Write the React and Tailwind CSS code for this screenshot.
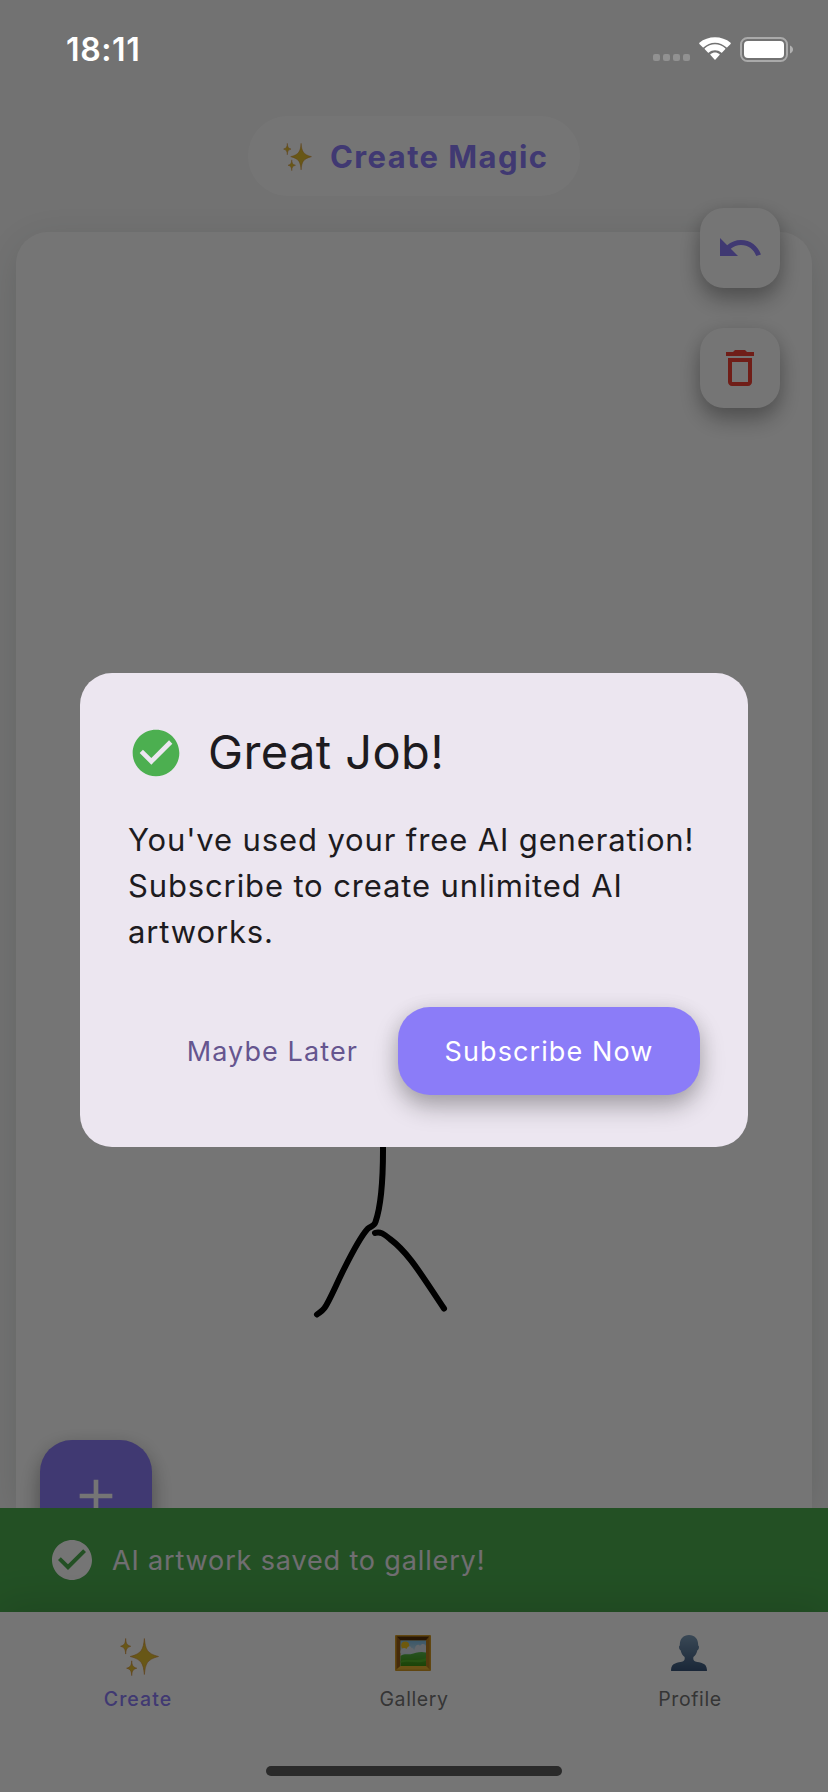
import React from "react";

function Sparkles({ className }) {
  const star = (cx, cy, rx, ry) => {
    const k = 0.17;
    return `M${cx} ${cy - ry}C${cx + rx * 0.08} ${cy - ry * 0.4} ${cx + rx * k} ${cy - ry * k} ${cx + rx} ${cy}C${cx + rx * k} ${cy + ry * k} ${cx + rx * 0.08} ${cy + ry * 0.4} ${cx} ${cy + ry}C${cx - rx * 0.08} ${cy + ry * 0.4} ${cx - rx * k} ${cy + ry * k} ${cx - rx} ${cy}C${cx - rx * k} ${cy - ry * k} ${cx - rx * 0.08} ${cy - ry * 0.4} ${cx} ${cy - ry}Z`;
  };
  return (
    <svg viewBox="0 0 40 39" className={className} fill="#e2bd30" stroke="#cf8a30" strokeWidth="0.6" strokeLinejoin="round">
      <path d={star(25, 19, 14.5, 18.5)} />
      <path d={star(5.8, 8.5, 5.2, 8)} />
      <path d={star(12, 31, 5.2, 7.6)} />
    </svg>
  );
}

function FramedPicture({ className }) {
  return (
    <svg viewBox="0 0 36 36" className={className}>
      <defs>
        <linearGradient id="sky" x1="0" y1="0" x2="0" y2="1">
          <stop offset="0" stopColor="#7fc0e6" />
          <stop offset="0.55" stopColor="#d5e2ec" />
        </linearGradient>
        <linearGradient id="hill" x1="0" y1="0" x2="0" y2="1">
          <stop offset="0" stopColor="#56b548" />
          <stop offset="1" stopColor="#3d9410" />
        </linearGradient>
      </defs>
      <rect width="36" height="36" rx="1" fill="#d39a24" />
      <path d="M1.5 1.5h33L31 5.500H5z" fill="#5a3209" />
      <path d="M1.5 1.5 5.500 5.500v25.500l-4 3.500z" fill="#9a5f17" />
      <path d="M34.500 1.500 31 5.500V31l3.500 3.500z" fill="#b87d1d" />
      <path d="M1.500 34.500 5.500 31H31l3.500 3.500z" fill="#e6b431" />
      <rect x="5.500" y="5.500" width="25.500" height="25.500" fill="url(#sky)" />
      <circle cx="10.200" cy="10.500" r="4" fill="#f0c21c" />
      <path d="M5.500 16c1-3 4-4 6-2 1-3 4-4 5-1 2 0 3 2 3 5h-14zM20 13c1-4 4-4 5-2 2-3 5-2 6 0v8H18z" fill="#dbe0ea" />
      <path d="M5.500 21c4-3 8-1 11-2s9-3 14.500-1.500V31H5.500z" fill="url(#hill)" />
      <path d="M5.500 26c8-3 16 1 25.500-3v3c-9 3-17-1-25.500 2z" fill="#55b52a" />
    </svg>
  );
}

function Bust({ className }) {
  return (
    <svg viewBox="0 0 36 36" className={className}>
      <defs>
        <linearGradient id="bust" x1="0" y1="0" x2="0" y2="1">
          <stop offset="0" stopColor="#7d9dba" />
          <stop offset="1" stopColor="#39557a" />
        </linearGradient>
      </defs>
      <path
        fill="url(#bust)"
        d="M18 0C12.200 0 8.600 4 8.800 10.500c-1.200.2-1 4 .8 4.700.6 3 2 5.300 4 6.800.4 2.400-.2 4-2 4.600-4.800 1.400-11.200.8-11.600 8.400-.1.600.2 1 .8 1h34.400c.6 0 .9-.4.8-1-.4-7.600-6.800-7-11.600-8.400-1.800-.6-2.400-2.200-2-4.600 2-1.500 3.400-3.800 4-6.800 1.800-.7 2-4.500.8-4.700C27.400 4 23.800 0 18 0z"
      />
    </svg>
  );
}

function CheckCircle({ className }) {
  return (
    <svg viewBox="0 0 24 24" className={className} fill="currentColor">
      <path d="M12 2C6.480 2 2 6.480 2 12s4.480 10 10 10 10-4.480 10-10S17.520 2 12 2zm-2 15l-5-5 1.410-1.410L10 14.170l7.590-7.590L19 8l-9 9z" />
    </svg>
  );
}

function Header() {
  return (
    <header className="flex h-[232px] shrink-0 justify-center pt-[116px]">
      <div className="flex h-20 w-[332px] items-center rounded-[40px] bg-white pl-[35px]">
        <Sparkles className="mt-0.5 h-7 w-[29px] shrink-0" />
        <h1 className="ml-[18px] pt-0.5 text-[31px] leading-10 font-bold tracking-[1.400px] whitespace-nowrap text-[#8b7cf8]">
          Create Magic
        </h1>
      </div>
    </header>
  );
}

function ToolButton({ label, className, children }) {
  return (
    <button
      aria-label={label}
      className={`flex size-20 items-center justify-center rounded-3xl bg-white shadow-[0_12px_22px_rgba(0,0,0,0.28),0_2px_18px_rgba(0,0,0,0.10)] ${className}`}
    >
      <svg viewBox="0 0 24 24" className="size-12" fill="currentColor">
        {children}
      </svg>
    </button>
  );
}

function Canvas() {
  return (
    <main className="relative mx-4 flex-1 rounded-t-[32px] bg-white shadow-[0_8px_40px_rgba(30,50,45,0.14)]">
      <div className="absolute -top-6 right-8 flex flex-col gap-10">
        <ToolButton label="Undo" className="text-[#8b7cf8]">
          <path d="M12.500 8c-2.650 0-5.050.99-6.900 2.600L2 7v9h9l-3.620-3.620c1.390-1.160 3.160-1.880 5.120-1.880 3.540 0 6.550 2.310 7.600 5.500l2.370-.78C21.080 11.030 17.150 8 12.500 8z" />
        </ToolButton>
        <ToolButton label="Delete" className="text-[#f44336]">
          <path d="M6 19c0 1.100.9 2 2 2h8c1.100 0 2-.9 2-2V7H6v12zM8 9h8v10H8V9zm7.500-5l-1-1h-5l-1 1H5v2h14V4z" />
        </ToolButton>
      </div>
      <svg
        viewBox="290 1100 180 240"
        className="absolute top-[868px] left-[274px] h-[240px] w-[180px]"
        fill="none"
        stroke="#000"
        strokeWidth="6"
        strokeLinecap="round"
        strokeLinejoin="round"
      >
        <path d="M383 1100V1150C383 1180 381 1206 375.500 1222C374 1227 370 1226 367.500 1229C362 1235 352 1253 344 1269C336 1285 329 1302 324.500 1308C321.500 1312 319 1312.500 317 1314.500" />
        <path d="M375 1233C380 1231 384 1234 390 1239C409 1253 422 1276 444 1308.500" />
      </svg>
      <button
        aria-label="Add"
        className="absolute top-[1208px] left-6 flex size-28 items-center justify-center rounded-[32px] bg-[#8b7cf8] text-white shadow-[0_12px_22px_rgba(0,0,0,0.28),0_2px_18px_rgba(0,0,0,0.10)]"
      >
        <svg viewBox="0 0 24 24" className="size-14" fill="currentColor">
          <path d="M19 13h-6v6h-2v-6H5v-2h6V5h2v6h6v2z" />
        </svg>
      </button>
    </main>
  );
}

function SnackBar() {
  return (
    <div className="relative flex h-[104px] shrink-0 items-center bg-[#4caf50] pl-12">
      <CheckCircle className="size-12 text-white" />
      <p className="ml-4 pt-0.5 text-[27px] leading-10 tracking-[0.860px] whitespace-nowrap text-[#f5eff7]">
        AI artwork saved to gallery!
      </p>
    </div>
  );
}

function NavItem({ label, className, children }) {
  return (
    <a className={`flex flex-1 flex-col items-center ${className}`}>
      <span className="flex h-[75px] items-start justify-center">{children}</span>
      <span className="text-[19.500px] leading-6">{label}</span>
    </a>
  );
}

function BottomNav() {
  return (
    <nav className="relative flex h-[180px] shrink-0 bg-white shadow-[0_-4px_40px_rgba(0,0,0,0.14)]">
      <NavItem label="Create" className="font-medium tracking-[1.050px] text-[#8b7cf8]">
        <Sparkles className="mt-[26px] ml-[3px] h-[38px] w-[39px]" />
      </NavItem>
      <NavItem label="Gallery" className="tracking-[0.600px] text-[#757575]">
        <FramedPicture className="mt-[23px] mr-[3px] size-9" />
      </NavItem>
      <NavItem label="Profile" className="tracking-[0.600px] text-[#757575]">
        <Bust className="mt-[23px] mr-[3px] size-9" />
      </NavItem>
    </nav>
  );
}

function StatusBar() {
  return (
    <div className="absolute inset-x-0 top-0 flex h-[100px] items-start justify-between pr-[34px] pl-[66px] text-white">
      <time className="mt-[30px] text-[32px] leading-10 font-semibold tracking-[0.600px]">18:11</time>
      <div className="mt-9 flex items-start">
        <div className="mt-[18px] flex gap-[3px]">
          <i className="size-[7px] rounded-[2px] bg-[#919191]" />
          <i className="size-[7px] rounded-[2px] bg-[#919191]" />
          <i className="size-[7px] rounded-[2px] bg-[#919191]" />
          <i className="size-[7px] rounded-[2px] bg-[#919191]" />
        </div>
        <svg viewBox="0 0 32 24" className="mt-px ml-[9.500px] h-6 w-8" fill="currentColor">
          <path d="M16 5.700c4.300 0 8.300 1.700 11.300 4.600.3.300.7.300 1 0l3.300-3.400c.3-.3.300-.8 0-1.100C23.100-1.600 8.900-1.600.4 5.800c-.3.300-.3.800 0 1.100l3.300 3.400c.3.300.7.300 1 0C7.700 7.400 11.700 5.700 16 5.700z" />
          <path d="M16 13.200c2.300 0 4.400.8 6.100 2.300.3.300.7.300 1 0l3.100-3.200c.3-.3.300-.8 0-1.100-5.700-5.300-14.700-5.300-20.400 0-.3.300-.3.800 0 1.100l3.100 3.200c.3.300.7.300 1 0 1.700-1.500 3.800-2.300 6.100-2.300z" />
          <path d="M20.500 18.100c.3-.3.300-.8 0-1-2.600-2.200-6.400-2.200-9 0-.3.200-.3.700 0 1l4 4.500c.3.300.7.300 1 0z" />
        </svg>
        <svg viewBox="0 0 54 26" className="ml-[9px] h-[26px] w-[54px]">
          <rect x="1" y="2" width="46" height="23" rx="6.500" fill="none" stroke="#fff" strokeOpacity="0.400" strokeWidth="2" />
          <rect x="4" y="5" width="40" height="17" rx="4" fill="#fff" />
          <path d="M50 9.500c4 1.500 4 6.500 0 8z" fill="#fff" fillOpacity="0.450" />
        </svg>
      </div>
    </div>
  );
}

function SubscribeDialog() {
  return (
    <section role="dialog" className="mt-[28px] h-[474px] w-[668px] rounded-[32px] bg-[#ece6f0] px-12 pt-[52px] text-[#1d1b20]">
      <div className="flex items-center gap-6">
        <CheckCircle className="size-14 text-[#4caf50]" />
        <h2 className="pb-0.5 text-[47px] leading-[54px] tracking-[0.400px] whitespace-nowrap">Great Job!</h2>
      </div>
      <p className="mt-[36px] text-[31px] leading-[46px] tracking-[0.870px] whitespace-nowrap">
        You've used your free AI generation!
        <br />
        Subscribe to create unlimited AI
        <br />
        artworks.
      </p>
      <div className="mt-[52px] flex items-center justify-end gap-4">
        <button className="px-6 pt-0.5 text-[27px] leading-10 tracking-[1.100px] whitespace-nowrap text-[#65558f]">
          Maybe Later
        </button>
        <button className="h-[88px] w-[302px] rounded-[32px] bg-[#8b7cf8] pt-0.5 text-[27px] tracking-[1.100px] whitespace-nowrap text-white shadow-[0_12px_24px_rgba(0,0,0,0.280),0_2px_20px_rgba(0,0,0,0.080)]">
          Subscribe Now
        </button>
      </div>
    </section>
  );
}

export default function App() {
  return (
    <div className="relative flex h-[1792px] w-[828px] flex-col overflow-hidden bg-[#f9f9f9] font-['Inter',sans-serif]">
      <Header />
      <Canvas />
      <SnackBar />
      <BottomNav />
      <div className="absolute inset-0 flex items-center justify-center bg-black/54">
        <SubscribeDialog />
      </div>
      <StatusBar />
      <div className="absolute bottom-4 left-[266px] h-[10px] w-[296px] rounded-full bg-[#2a2a2a]" />
    </div>
  );
}
